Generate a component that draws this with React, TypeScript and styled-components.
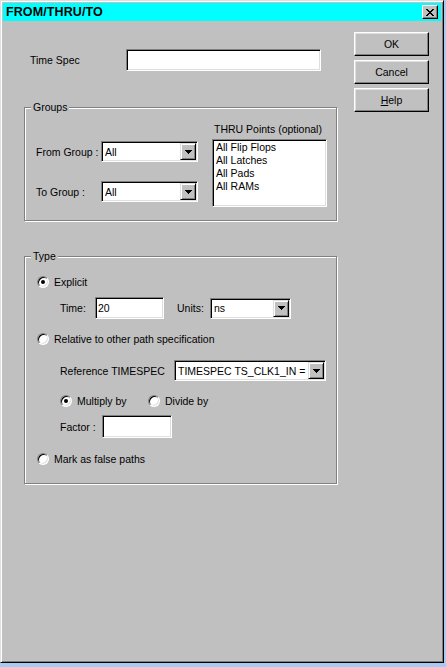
import React from "react";
import styled, { createGlobalStyle } from "styled-components";

const colours = {
    face: "#c0c0c0",
    light: "#dfdfdf",
    highlight: "#ffffff",
    shadow: "#808080",
    dark: "#000000",
    desktop: "#a6caf0",
    title: "#00ffff"
};


const GlobalStyle =
  createGlobalStyle`
  html, body {
    margin: 0;
    padding: 0;
    background: ${colours.desktop};
  }
  body {
    font-family: "Liberation Sans", Arial, sans-serif;
    font-size: 10.5px;
    color: #000;
  }
  `;


const Window =
  styled.div`
  width: 444px;
  height: 663px;
  box-sizing: border-box;
  padding: 2px;
  background: ${colours.face};
  border: 1px solid;
  border-color: ${colours.light} ${colours.dark} ${colours.dark} ${colours.light};
  box-shadow: inset 1px 1px 0 ${colours.highlight}, inset -1px -1px 0 ${colours.shadow};
  display: flex;
  flex-direction: column;
  `;


const TitleBar =
  styled.div`
  height: 18px;
  flex: none;
  background: ${colours.title};
  display: flex;
  align-items: center;
  justify-content: space-between;
  padding: 0 3px 0 3px;
  `;


const TitleText =
  styled.span`
  font-weight: bold;
  font-size: 12.5px;
  line-height: 14px;
  letter-spacing: 0.1px;
  `;


const CloseButton =
  styled.div`
  width: 16px;
  height: 14px;
  box-sizing: border-box;
  background: ${colours.face};
  border: 1px solid;
  border-color: ${colours.highlight} ${colours.dark} ${colours.dark} ${colours.highlight};
  box-shadow: inset -1px -1px 0 ${colours.shadow};
  display: flex;
  align-items: center;
  justify-content: center;
  `;


const Body =
  styled.div`
  display: grid;
  grid-template-columns: 314px 75px;
  column-gap: 16px;
  align-items: start;
  padding-left: 21px;
  `;


const Form =
  styled.div`
  display: flex;
  flex-direction: column;
  `;


const ButtonColumn =
  styled.div`
  display: flex;
  flex-direction: column;
  gap: 4px;
  margin-top: 11px;
  `;


const PushButton =
  styled.button`
  width: 75px;
  height: 24px;
  box-sizing: border-box;
  padding: 0;
  background: ${colours.face};
  border: 1px solid;
  border-color: ${colours.highlight} ${colours.dark} ${colours.dark} ${colours.highlight};
  box-shadow: inset -1px -1px 0 ${colours.shadow}, inset 1px 1px 0 ${colours.light};
  font-family: "Liberation Sans", Arial, sans-serif;
  font-size: 10.5px;
  color: #000;
  `;


const TimeSpecRow =
  styled.div`
  margin-top: 28px;
  padding-left: 6px;
  display: flex;
  align-items: center;
  `;


interface LabelProps {
  $width?: number;
  $gap?: number;
}

const Label =
  styled.span<LabelProps>`
  flex: none;
  width: ${props => props.$width ? `${props.$width}px` : "auto"};
  margin-left: ${props => props.$gap ?? 0}px;
  white-space: nowrap;
  line-height: 12px;
  `;


interface BoxProps {
  $width: number;
  $height: number;
}

const TextBox =
  styled.div<BoxProps>`
  flex: none;
  width: ${props => props.$width}px;
  height: ${props => props.$height}px;
  box-sizing: border-box;
  background: #fff;
  border: 1px solid;
  border-color: ${colours.shadow} ${colours.highlight} ${colours.highlight} ${colours.shadow};
  box-shadow: inset 1px 1px 0 ${colours.dark}, inset -1px -1px 0 ${colours.light};
  padding: 1px 1px 1px 2px;
  display: flex;
  align-items: center;
  overflow: hidden;
  white-space: nowrap;
  `;


const ComboValue =
  styled.span`
  flex: 1;
  min-width: 0;
  overflow: hidden;
  white-space: nowrap;
  padding-left: 1px;
  `;


const DropButton =
  styled.div`
  flex: none;
  width: 16px;
  align-self: stretch;
  box-sizing: border-box;
  background: ${colours.face};
  border: 1px solid;
  border-color: ${colours.light} ${colours.dark} ${colours.dark} ${colours.light};
  box-shadow: inset 1px 1px 0 ${colours.highlight}, inset -1px -1px 0 ${colours.shadow};
  display: flex;
  align-items: center;
  justify-content: center;
  `;


interface GroupBoxProps {
  $top: number;
}

const GroupBox =
  styled.div<GroupBoxProps>`
  position: relative;
  width: 313px;
  box-sizing: border-box;
  margin-top: ${props => props.$top}px;
  border: 1px solid ${colours.shadow};
  box-shadow: inset 1px 1px 0 ${colours.highlight}, 1px 1px 0 ${colours.highlight};
  `;


const Legend =
  styled.span`
  position: absolute;
  top: -7px;
  left: 6px;
  padding: 0 2px;
  line-height: 12px;
  background: ${colours.face};
  `;


const GroupsBody =
  styled.div`
  display: flex;
  `;


const GroupsLeft =
  styled.div`
  width: 187px;
  padding-top: 33px;
  display: flex;
  flex-direction: column;
  gap: 19px;
  `;


const GroupRow =
  styled.div`
  padding-left: 11px;
  display: flex;
  align-items: center;
  `;


const GroupsRight =
  styled.div`
  padding: 15px 0 13px 0;
  display: flex;
  flex-direction: column;
  `;


const ListBox =
  styled.div`
  width: 115px;
  height: 68px;
  margin-top: 4px;
  box-sizing: border-box;
  background: #fff;
  border: 1px solid;
  border-color: ${colours.shadow} ${colours.highlight} ${colours.highlight} ${colours.shadow};
  box-shadow: inset 1px 1px 0 ${colours.dark}, inset -1px -1px 0 ${colours.light};
  padding: 1px 1px 1px 3px;
  `;


const ListItem =
  styled.div`
  line-height: 13px;
  white-space: nowrap;
  `;


const TypeBody =
  styled.div`
  padding: 18px 0 17px 0;
  display: flex;
  flex-direction: column;
  `;


interface TypeRowProps {
  $indent: number;
  $top: number;
  $height: number;
}

const TypeRow =
  styled.div<TypeRowProps>`
  padding-left: ${props => props.$indent}px;
  margin-top: ${props => props.$top}px;
  height: ${props => props.$height}px;
  display: flex;
  align-items: center;
  `;


interface RadioProps {
  $checked: boolean;
}

const RadioCircle =
  styled.span<RadioProps>`
  position: relative;
  flex: none;
  width: 12px;
  height: 12px;
  box-sizing: border-box;
  border-radius: 50%;
  background: #fff;
  border: 1px solid;
  border-color: ${colours.shadow} ${colours.highlight} ${colours.highlight} ${colours.shadow};
  box-shadow: inset 1px 1px 0 ${colours.dark}, inset -1px -1px 0 ${colours.light};
  &::after {
    content: "";
    display: ${props => props.$checked ? "block" : "none"};
    position: absolute;
    left: 3px;
    top: 3px;
    width: 4px;
    height: 4px;
    border-radius: 50%;
    background: ${colours.dark};
  }
  `;


interface RadioOptionProps {
  $width?: number;
}

const RadioOption =
  styled.label<RadioOptionProps>`
  flex: none;
  width: ${props => props.$width ? `${props.$width}px` : "auto"};
  display: flex;
  align-items: center;
  gap: 5px;
  line-height: 12px;
  white-space: nowrap;
  `;


const DownArrow =
  () => (
      <svg width="7" height="4" viewBox="0 0 7 4" shapeRendering="crispEdges">
          <path d="M0 0h7v1h-1v1h-1v1h-1v1h-1v-1h-1v-1h-1v-1h-1z" fill="#000"/>
      </svg>
  );


const CloseGlyph =
  () => (
      <svg width="8" height="7" viewBox="0 0 8 7" shapeRendering="crispEdges">
          <path
              d="M0 0h2v1h-2z M6 0h2v1h-2z M1 1h2v1h-2z M5 1h2v1h-2z M2 2h4v1h-4z M3 3h2v1h-2z M2 4h4v1h-4z M1 5h2v1h-2z M5 5h2v1h-2z M0 6h2v1h-2z M6 6h2v1h-2z"
              fill="#000"/>
      </svg>
  );


interface ComboProps {
  width: number;
  value: string;
}

const ComboBox =
  ({ width, value }: ComboProps) => (
      <TextBox $width={width} $height={21}>
          <ComboValue>{ value }</ComboValue>
          <DropButton>
              <DownArrow/>
          </DropButton>
      </TextBox>
  );


interface RadioButtonProps {
  checked?: boolean;
  width?: number;
  children: React.ReactNode;
}

const RadioButton =
  ({ checked = false, width, children }: RadioButtonProps) => (
      <RadioOption $width={width}>
          <RadioCircle $checked={checked}/>
          <span>{ children }</span>
      </RadioOption>
  );


const thruPoints = [
    "All Flip Flops",
    "All Latches",
    "All Pads",
    "All RAMs"
];


const App =
  () => (
      <>
          <GlobalStyle/>
          <Window>
              <TitleBar>
                  <TitleText>FROM/THRU/TO</TitleText>
                  <CloseButton>
                      <CloseGlyph/>
                  </CloseButton>
              </TitleBar>
              <Body>
                  <Form>
                      <TimeSpecRow>
                          <Label $width={96}>Time Spec</Label>
                          <TextBox $width={195} $height={22}/>
                      </TimeSpecRow>

                      <GroupBox $top={36}>
                          <Legend>Groups</Legend>
                          <GroupsBody>
                              <GroupsLeft>
                                  <GroupRow>
                                      <Label $width={65}>From Group :</Label>
                                      <ComboBox width={97} value="All"/>
                                  </GroupRow>
                                  <GroupRow>
                                      <Label $width={65}>To Group :</Label>
                                      <ComboBox width={97} value="All"/>
                                  </GroupRow>
                              </GroupsLeft>
                              <GroupsRight>
                                  <Label $gap={2}>THRU Points (optional)</Label>
                                  <ListBox>
                                      { thruPoints.map(point =>
                                          <ListItem key={point}>{ point }</ListItem>) }
                                  </ListBox>
                              </GroupsRight>
                          </GroupsBody>
                      </GroupBox>

                      <GroupBox $top={35}>
                          <Legend>Type</Legend>
                          <TypeBody>
                              <TypeRow $indent={12} $top={0} $height={14}>
                                  <RadioButton checked>Explicit</RadioButton>
                              </TypeRow>
                              <TypeRow $indent={35} $top={8} $height={22}>
                                  <Label $width={35}>Time:</Label>
                                  <TextBox $width={69} $height={22}>20</TextBox>
                                  <Label $width={33} $gap={13}>Units:</Label>
                                  <ComboBox width={81} value="ns"/>
                              </TypeRow>
                              <TypeRow $indent={12} $top={13} $height={14}>
                                  <RadioButton>Relative to other path specification</RadioButton>
                              </TypeRow>
                              <TypeRow $indent={35} $top={14} $height={21}>
                                  <Label $width={114}>Reference TIMESPEC</Label>
                                  <ComboBox width={152} value="TIMESPEC TS_CLK1_IN = "/>
                              </TypeRow>
                              <TypeRow $indent={35} $top={13} $height={14}>
                                  <RadioButton checked width={88}>Multiply by</RadioButton>
                                  <RadioButton>Divide by</RadioButton>
                              </TypeRow>
                              <TypeRow $indent={35} $top={7} $height={23}>
                                  <Label $width={42}>Factor :</Label>
                                  <TextBox $width={70} $height={23}/>
                              </TypeRow>
                              <TypeRow $indent={12} $top={14} $height={14}>
                                  <RadioButton>Mark as false paths</RadioButton>
                              </TypeRow>
                          </TypeBody>
                      </GroupBox>
                  </Form>

                  <ButtonColumn>
                      <PushButton>OK</PushButton>
                      <PushButton>Cancel</PushButton>
                      <PushButton><u>H</u>elp</PushButton>
                  </ButtonColumn>
              </Body>
          </Window>
      </>
  );


export default App;
